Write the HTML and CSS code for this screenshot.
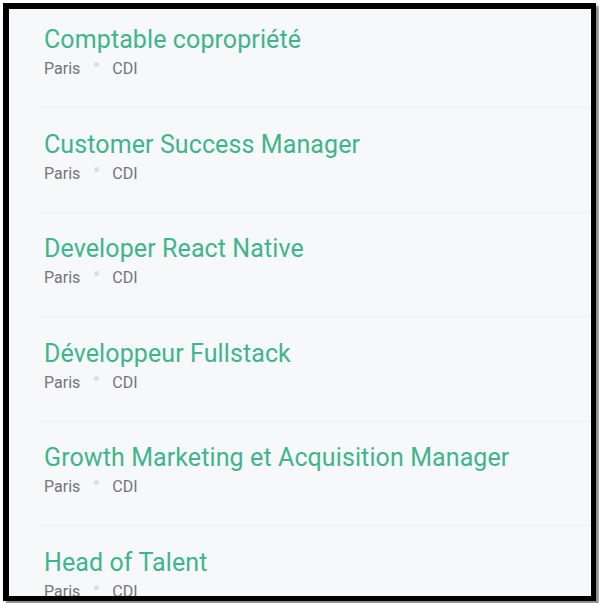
FILE: index.html
```html
<!DOCTYPE html>
<html lang="fr">
<head>
  <meta charset="UTF-8">
  <title>Offres d'emploi</title>
  <link rel="stylesheet" href="styles.css">
</head>

<body>

  <div class="frame">
    <ul class="jobs">
      <li class="job">
        <a class="job-title" href="#">Comptable copropriété</a>
        <div class="job-meta"><span>Paris</span><i class="dot"></i><span>CDI</span></div>
      </li>
      <li class="job">
        <a class="job-title" href="#">Customer Success Manager</a>
        <div class="job-meta"><span>Paris</span><i class="dot"></i><span>CDI</span></div>
      </li>
      <li class="job">
        <a class="job-title" href="#">Developer React Native</a>
        <div class="job-meta"><span>Paris</span><i class="dot"></i><span>CDI</span></div>
      </li>
      <li class="job">
        <a class="job-title" href="#">Développeur Fullstack</a>
        <div class="job-meta"><span>Paris</span><i class="dot"></i><span>CDI</span></div>
      </li>
      <li class="job">
        <a class="job-title" href="#">Growth Marketing et Acquisition Manager</a>
        <div class="job-meta"><span>Paris</span><i class="dot"></i><span>CDI</span></div>
      </li>
      <li class="job">
        <a class="job-title" href="#">Head of Talent</a>
        <div class="job-meta"><span>Paris</span><i class="dot"></i><span>CDI</span></div>
      </li>
    </ul>
  </div>

</body>
</html>
```

FILE: styles.css
```css
body {
  font-family: Roboto, "Liberation Sans", Arial, sans-serif;
  background: #ffffff;
  margin: 0;
  padding: 3px;
}

.frame {
  height: 587px;
  border-style: solid;
  border-color: #000000;
  border-width: 6px 5px 5px 6px;
  background-color: #f7f8fa;
  box-shadow: 3px 3px 2px rgba(0, 0, 0, 0.45);
  overflow: hidden;
}

.jobs {
  list-style: none;
  margin: -5.5px 0 0 31px;
  padding: 0;
}

.job {
  padding: 20.5px 0 27px 4px;
  border-bottom: 1px solid #eceef1;
}

.job-title {
  display: block;
  font-size: 25px;
  line-height: 32px;
  letter-spacing: 0.1px;
  color: #40b58b;
  text-decoration: none;
}

.job-meta {
  margin-top: 2px;
  font-size: 16px;
  line-height: 22px;
  color: #737679;
}

.dot {
  display: inline-block;
  width: 5px;
  height: 5px;
  margin: 0 13.5px;
  border-radius: 50%;
  background-color: #dcdee1;
  vertical-align: 7px;
}
```
